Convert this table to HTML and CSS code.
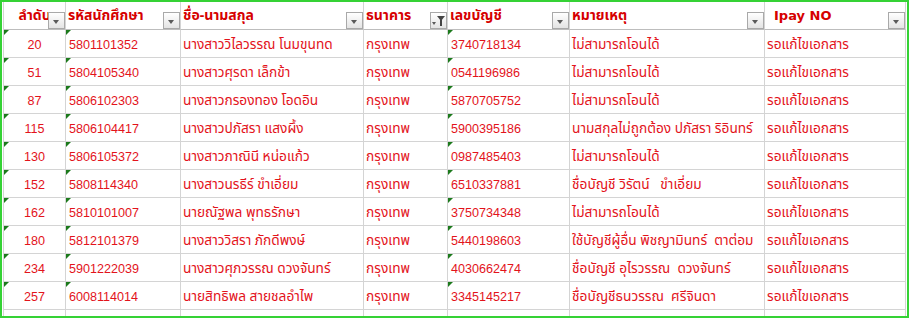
FILE: index.html
```html
<!DOCTYPE html>
<html lang="th">
<head>
<meta charset="utf-8">
<title>Sheet</title>
<link rel="stylesheet" href="styles.css">
</head>
<body>
<div class="frame">
  <div class="sheet">
    <div class="cell head center">ลำดับ<span class="fbtn"><span class="arrow"></span></span></div>
    <div class="cell head">รหัสนักศึกษา<span class="fbtn"><span class="arrow"></span></span></div>
    <div class="cell head">ชื่อ-นามสกุล<span class="fbtn"><span class="arrow"></span></span></div>
    <div class="cell head">ธนาคาร<span class="fbtn active"><span class="arrow small"></span><span class="funnel"></span></span></div>
    <div class="cell head">เลขบัญชี<span class="fbtn"><span class="arrow"></span></span></div>
    <div class="cell head">หมายเหตุ<span class="fbtn"><span class="arrow"></span></span></div>
    <div class="cell head ipay">Ipay NO<span class="fbtn"><span class="arrow"></span></span></div>

    <div class="cell num center tri">20</div><div class="cell num tri">5801101352</div><div class="cell">นางสาววิไลวรรณ โนมขุนทด</div><div class="cell">กรุงเทพ</div><div class="cell num tri">3740718134</div><div class="cell">ไม่สามารถโอนได้</div><div class="cell">รอแก้ไขเอกสาร</div>
    <div class="cell num center tri">51</div><div class="cell num tri">5804105340</div><div class="cell">นางสาวศุรดา เล็กข้า</div><div class="cell">กรุงเทพ</div><div class="cell num tri">0541196986</div><div class="cell">ไม่สามารถโอนได้</div><div class="cell">รอแก้ไขเอกสาร</div>
    <div class="cell num center tri">87</div><div class="cell num tri">5806102303</div><div class="cell">นางสาวกรองทอง โอดอิน</div><div class="cell">กรุงเทพ</div><div class="cell num tri">5870705752</div><div class="cell">ไม่สามารถโอนได้</div><div class="cell">รอแก้ไขเอกสาร</div>
    <div class="cell num center tri">115</div><div class="cell num tri">5806104417</div><div class="cell">นางสาวปภัสรา แสงผึ้ง</div><div class="cell">กรุงเทพ</div><div class="cell num tri">5900395186</div><div class="cell">นามสกุลไม่ถูกต้อง ปภัสรา ริอินทร์</div><div class="cell">รอแก้ไขเอกสาร</div>
    <div class="cell num center tri">130</div><div class="cell num tri">5806105372</div><div class="cell">นางสาวภาณินี หน่อแก้ว</div><div class="cell">กรุงเทพ</div><div class="cell num tri">0987485403</div><div class="cell">ไม่สามารถโอนได้</div><div class="cell">รอแก้ไขเอกสาร</div>
    <div class="cell num center tri">152</div><div class="cell num tri">5808114340</div><div class="cell">นางสาวนรธีร์ ขำเอี่ยม</div><div class="cell">กรุงเทพ</div><div class="cell num tri">6510337881</div><div class="cell">ชื่อบัญชี วิรัตน์&nbsp;&nbsp; ขำเอี่ยม</div><div class="cell">รอแก้ไขเอกสาร</div>
    <div class="cell num center tri">162</div><div class="cell num tri">5810101007</div><div class="cell">นายณัฐพล พุทธรักษา</div><div class="cell">กรุงเทพ</div><div class="cell num tri">3750734348</div><div class="cell">ไม่สามารถโอนได้</div><div class="cell">รอแก้ไขเอกสาร</div>
    <div class="cell num center tri">180</div><div class="cell num tri">5812101379</div><div class="cell">นางสาววิสรา ภักดีพงษ์</div><div class="cell">กรุงเทพ</div><div class="cell num tri">5440198603</div><div class="cell">ใช้บัญชีผู้อื่น พิชญามินทร์&nbsp; ตาต่อม</div><div class="cell">รอแก้ไขเอกสาร</div>
    <div class="cell num center tri">234</div><div class="cell num tri">5901222039</div><div class="cell">นางสาวศุภวรรณ ดวงจันทร์</div><div class="cell">กรุงเทพ</div><div class="cell num tri">4030662474</div><div class="cell">ชื่อบัญชี อุไรวรรณ&nbsp; ดวงจันทร์</div><div class="cell">รอแก้ไขเอกสาร</div>
    <div class="cell num center tri">257</div><div class="cell num tri">6008114014</div><div class="cell">นายสิทธิพล สายชลอำไพ</div><div class="cell">กรุงเทพ</div><div class="cell num tri">3345145217</div><div class="cell">ชื่อบัญชีธนวรรณ&nbsp; ศรีจินดา</div><div class="cell">รอแก้ไขเอกสาร</div>
    <div class="cell"></div><div class="cell"></div><div class="cell"></div><div class="cell"></div><div class="cell"></div><div class="cell"></div><div class="cell"></div>
  </div>
</div>
</body>
</html>
```

FILE: styles.css
```css
html, body {
  margin: 0;
  padding: 0;
  background: #ffffff;
}
.frame {
  width: 909px;
  height: 318px;
  box-sizing: border-box;
  border: 2px solid #35d235;
  padding-left: 1px;
  overflow: hidden;
  background: #ffffff;
}
.sheet {
  display: grid;
  grid-template-columns: 62px 115px 183px 84px 122px 195px 141px;
  grid-auto-rows: 28px;
  border-left: 1px solid #d4d4d4;
  font-family: Tahoma, "Noto Sans Thai", "Noto Sans", "DejaVu Sans", sans-serif;
  font-size: 13.7px;
  color: #e3131b;
}
.cell {
  position: relative;
  box-sizing: border-box;
  border-right: 1px solid #d4d4d4;
  border-bottom: 1px solid #d4d4d4;
  display: flex;
  align-items: center;
  padding: 2px 0 0 2px;
  white-space: nowrap;
  overflow: hidden;
}
.num {
  font-family: Tahoma, "Liberation Sans", Arial, sans-serif;
  font-size: 12.6px;
  padding-left: 3px;
}
.center {
  justify-content: center;
  padding-left: 0;
}
.head {
  font-weight: bold;
  font-size: 14px;
  color: #d60000;
  border-bottom-color: #bdbdbd;
  padding-top: 0;
}
.head.ipay {
  padding-left: 9px;
  font-size: 13px;
  font-family: Tahoma, "DejaVu Sans", sans-serif;
}
.fbtn {
  position: absolute;
  right: 0;
  bottom: 0;
  width: 17px;
  height: 17px;
  box-sizing: border-box;
  border: 1px solid #a9a9a9;
  background: linear-gradient(#ffffff, #e4e4e4);
}
.arrow {
  position: absolute;
  left: 4px;
  top: 7px;
  width: 0;
  height: 0;
  border-left: 3.5px solid transparent;
  border-right: 3.5px solid transparent;
  border-top: 4px solid #5a5a5a;
}
.arrow.small {
  left: 1px;
  top: 9px;
  border-left-width: 2.5px;
  border-right-width: 2.5px;
  border-top-width: 3px;
}
.funnel {
  position: absolute;
  left: 6px;
  top: 3px;
  width: 0;
  height: 0;
  border-left: 4px solid transparent;
  border-right: 4px solid transparent;
  border-top: 5px solid #444;
}
.funnel::after {
  content: "";
  position: absolute;
  left: -1px;
  top: -1px;
  width: 2px;
  height: 6px;
  background: #444;
}
.tri::before {
  content: "";
  position: absolute;
  left: 0;
  top: 0;
  width: 0;
  height: 0;
  border-top: 5px solid #1c7a1c;
  border-right: 5px solid transparent;
}
```
